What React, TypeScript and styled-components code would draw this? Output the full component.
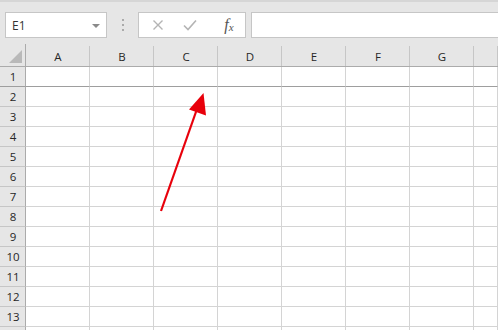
import styled, { createGlobalStyle } from 'styled-components';

const GlobalStyle = createGlobalStyle`
	html, body {
		margin: 0;
		padding: 0;
		background: #ffffff;
		overflow: hidden;
	}
	body {
		font-family: 'Open Sans', 'Noto Sans', sans-serif;
	}
`;

const columns = ['A', 'B', 'C', 'D', 'E', 'F', 'G', ''];
const rows = Array.from({ length: 13 }, (_, i) => i + 1);

export default function App() {
	return (
		<Page>
			<GlobalStyle />
			<Toolbar>
				<NameBox>
					<NameText>E1</NameText>
					<DropArrow />
				</NameBox>
				<Grip>
					<span />
					<span />
					<span />
				</Grip>
				<FormulaButtons>
					<IconSlot w={38}>
						<svg width='12' height='12' viewBox='0 0 12 12'>
							<path d='M1.5 1.5 L10.5 10.5 M10.5 1.5 L1.5 10.5' stroke='#b4b4b4' strokeWidth='1.4' fill='none' />
						</svg>
					</IconSlot>
					<IconSlot w={26}>
						<svg width='14' height='12' viewBox='0 0 14 12'>
							<path d='M1 6.5 L5 10.5 L13 1.5' stroke='#b4b4b4' strokeWidth='1.6' fill='none' />
						</svg>
					</IconSlot>
					<IconSlot w={30} gap={11}>
						<FxLabel>
							f<sub>x</sub>
						</FxLabel>
					</IconSlot>
				</FormulaButtons>
				<FormulaBar />
			</Toolbar>
			<Sheet>
				<Corner>
					<svg width='13' height='13' viewBox='0 0 13 13'>
						<path d='M13 0 L13 13 L0 13 Z' fill='#b9b9b9' />
					</svg>
				</Corner>
				{columns.map((c, i) => (
					<ColHeader key={i}>{c}</ColHeader>
				))}
				{rows.map(r => (
					<Row key={r} label={String(r)} dark={r === 1} />
				))}
				<Row label='' dark={false} />
				<Arrow viewBox='0 0 498 330' width='498' height='330'>
					<line x1='161' y1='211' x2='197' y2='109' stroke='#e8000b' strokeWidth='2.2' />
					<path d='M203.5 93 L189 109.5 L206 115.5 Z' fill='#e8000b' />
				</Arrow>
			</Sheet>
		</Page>
	);
}

function Row({ label, dark }: { label: string; dark: boolean }) {
	return (
		<>
			<RowHeader dark={dark}>{label}</RowHeader>
			{columns.map((_, i) => (
				<Cell key={i} dark={dark} />
			))}
		</>
	);
}

const Page = styled.div`
	width: 498px;
	height: 330px;
	overflow: hidden;
	background: #ffffff;
	position: relative;
`;

const Toolbar = styled.div`
	display: flex;
	align-items: flex-start;
	height: 44px;
	padding: 10px 0 0 5px;
	box-sizing: border-box;
	background: #e6e6e6;
	border-top: 2px solid #d6d6d6;
`;

const NameBox = styled.div`
	display: flex;
	align-items: center;
	justify-content: space-between;
	width: 102px;
	height: 26px;
	box-sizing: border-box;
	padding: 0 6px 0 6px;
	background: #ffffff;
	border: 1px solid #c6c6c6;
`;

const NameText = styled.span`
	font-size: 12px;
	color: #333333;
`;

const DropArrow = styled.span`
	width: 0;
	height: 0;
	margin-top: 1px;
	border-left: 4px solid transparent;
	border-right: 4px solid transparent;
	border-top: 4px solid #8a8a8a;
`;

const Grip = styled.div`
	display: flex;
	flex-direction: column;
	gap: 3px;
	width: 31px;
	align-items: center;
	padding-top: 7px;
	span {
		width: 2px;
		height: 2px;
		background: #aaaaaa;
	}
`;

const FormulaButtons = styled.div`
	display: flex;
	align-items: center;
	width: 108px;
	height: 26px;
	box-sizing: border-box;
	background: #ffffff;
	border: 1px solid #c6c6c6;
`;

const IconSlot = styled.span<{ w: number; gap?: number }>`
	display: flex;
	align-items: center;
	justify-content: center;
	width: ${({ w }) => w}px;
	margin-left: ${({ gap }) => gap ?? 0}px;
	flex-shrink: 0;
`;

const FxLabel = styled.span`
	font-family: 'Liberation Serif', 'DejaVu Serif', serif;
	font-style: italic;
	font-size: 16px;
	color: #555555;
	line-height: 1;
	sub {
		font-size: 11px;
		vertical-align: -1px;
	}
`;

const FormulaBar = styled.div`
	flex: 1;
	height: 26px;
	margin-left: 5px;
	box-sizing: border-box;
	background: #ffffff;
	border: 1px solid #c6c6c6;
	border-right: none;
`;

const Sheet = styled.div`
	position: relative;
	display: grid;
	grid-template-columns: 26px repeat(7, 64px) 1fr;
	grid-template-rows: 23px;
	grid-auto-rows: 20px;
	background: #ffffff;
`;

const Corner = styled.div`
	display: flex;
	align-items: flex-end;
	justify-content: flex-end;
	padding: 0 3px 3px 0;
	background: #e6e6e6;
	border-right: 1px solid #ababab;
	border-bottom: 1px solid #ababab;
`;

const ColHeader = styled.div`
	position: relative;
	display: flex;
	align-items: center;
	justify-content: center;
	padding-top: 3px;
	box-sizing: border-box;
	font-size: 11.5px;
	color: #262626;
	background: #e6e6e6;
	border-bottom: 1px solid #ababab;
	&::after {
		content: '';
		position: absolute;
		top: 2px;
		bottom: 0;
		right: 0;
		width: 1px;
		background: #c6c6c6;
	}
`;

const RowHeader = styled.div<{ dark: boolean }>`
	display: flex;
	align-items: center;
	justify-content: center;
	padding-left: 1px;
	font-size: 11.5px;
	color: #262626;
	background: #e6e6e6;
	border-right: 1px solid #ababab;
	border-bottom: 1px solid ${({ dark }) => (dark ? '#9e9e9e' : '#c6c6c6')};
	box-sizing: border-box;
`;

const Cell = styled.div<{ dark: boolean }>`
	border-right: 1px solid #d4d4d4;
	border-bottom: 1px solid ${({ dark }) => (dark ? '#9e9e9e' : '#d4d4d4')};
	box-sizing: border-box;
`;

const Arrow = styled.svg`
	position: absolute;
	top: -44px;
	left: 0;
	pointer-events: none;
`;
